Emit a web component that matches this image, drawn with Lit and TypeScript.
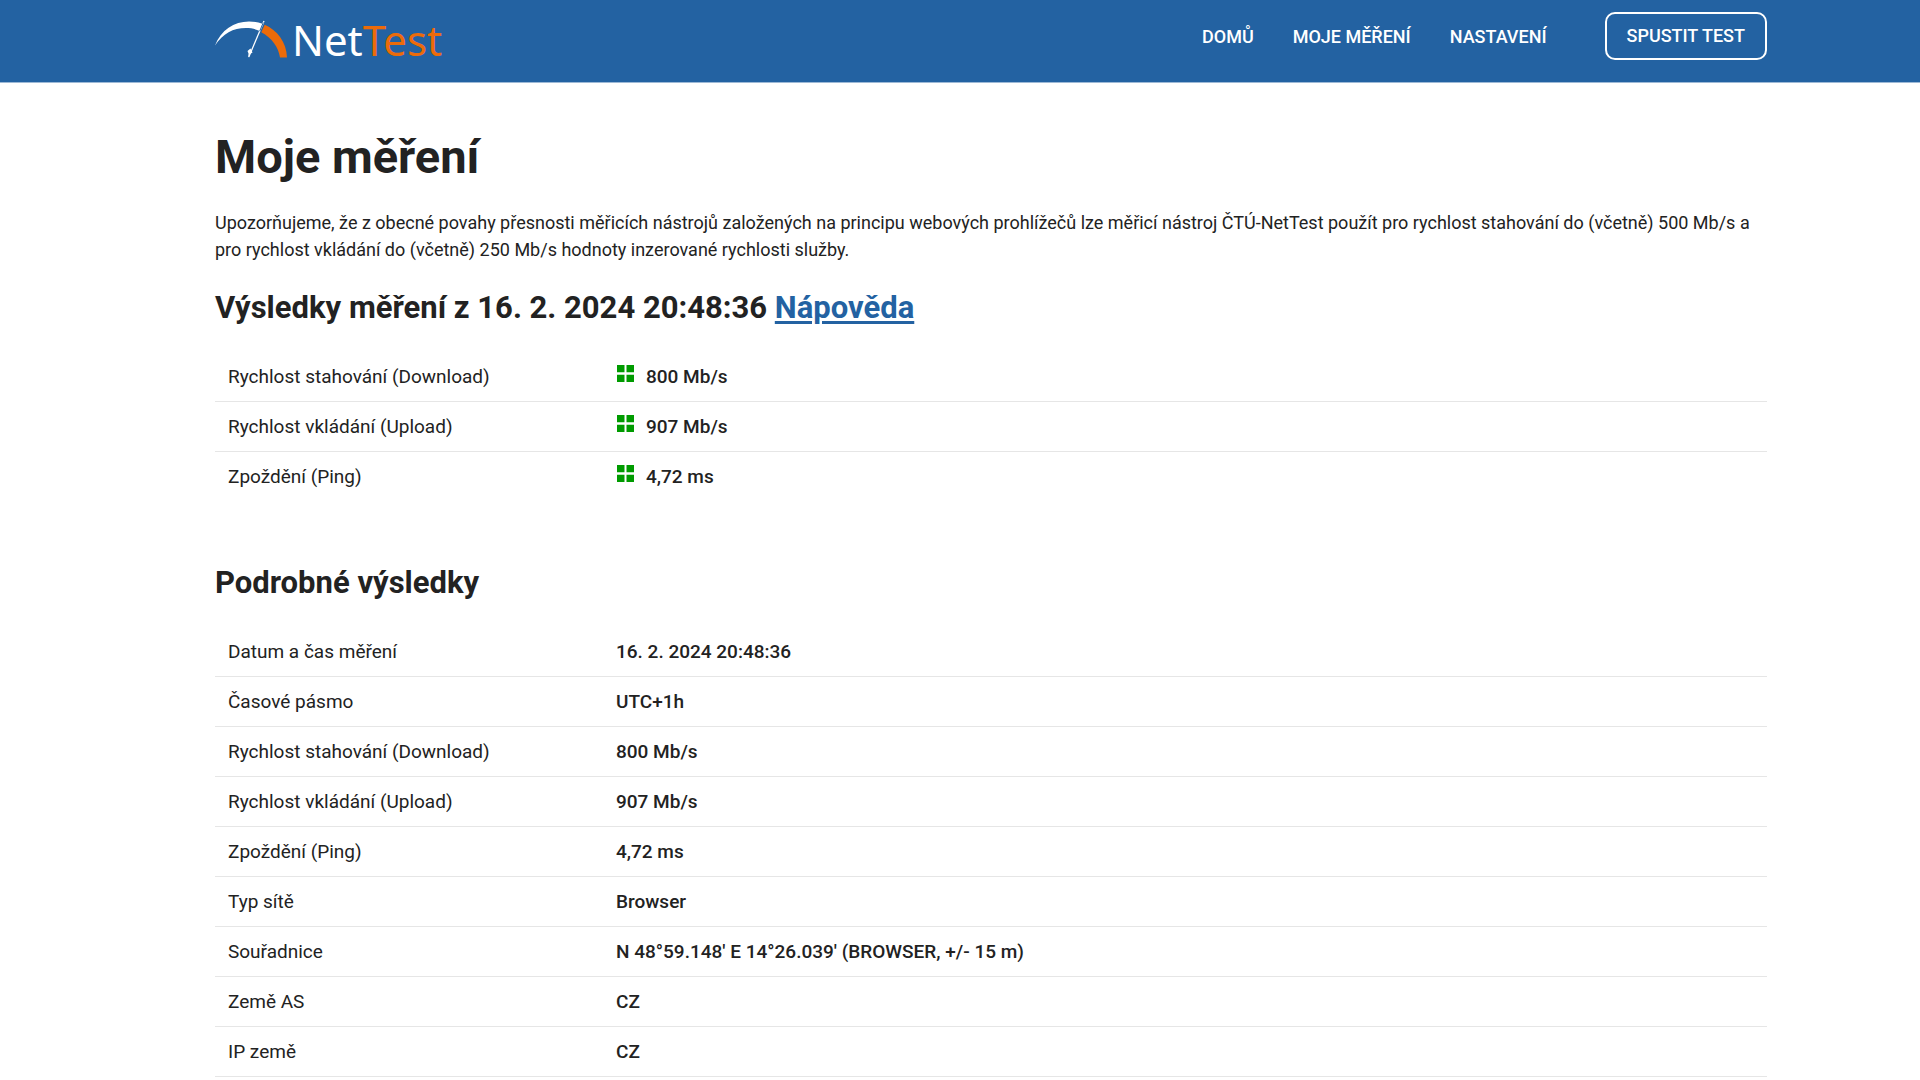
import { LitElement, html, css, svg } from "lit";
import { customElement } from "lit/decorators.js";

interface Row {
  label: string;
  value: string;
}

const SUMMARY: Row[] = [
  { label: "Rychlost stahování (Download)", value: "800 Mb/s" },
  { label: "Rychlost vkládání (Upload)", value: "907 Mb/s" },
  { label: "Zpoždění (Ping)", value: "4,72 ms" },
];

const DETAILS: Row[] = [
  { label: "Datum a čas měření", value: "16. 2. 2024 20:48:36" },
  { label: "Časové pásmo", value: "UTC+1h" },
  { label: "Rychlost stahování (Download)", value: "800 Mb/s" },
  { label: "Rychlost vkládání (Upload)", value: "907 Mb/s" },
  { label: "Zpoždění (Ping)", value: "4,72 ms" },
  { label: "Typ sítě", value: "Browser" },
  { label: "Souřadnice", value: "N 48°59.148' E 14°26.039' (BROWSER, +/- 15 m)" },
  { label: "Země AS", value: "CZ" },
  { label: "IP země", value: "CZ" },
];

const gauge = svg`
  <path d="M0 24.500C6 9 19 .5 34 .5c5 0 9.500 .8 13.500 2.300L44.700 10C41 8 36 7 31 7 18 7 8 12.500 0 24.500z" fill="#fff"/>
  <path d="M49.700 3.800C62 9 71.500 21 72 36.500h-7C63.500 26 57 17 46.300 11.200z" fill="#ec6b0a"/>
  <path d="M49 0 33.800 36" stroke="#fff" stroke-width="1.300" fill="none"/>
  <path d="M48.300 1.500 44.700 10.200" stroke="#2362a2" stroke-width="1" fill="none"/>
  <path d="M35.500 27.500 37.500 31.500 35 33 33.300 36.800 33.500 32.500 32.500 30z" fill="#fff"/>`;

const quality = html`<svg class="quality" viewBox="0 0 17 17" role="img" aria-label="Výborné">
  <path d="M0 0h7.500v7.200H0zM9.500 0H17v7.200H9.500zM0 9.800h7.500V17H0zM9.500 9.800H17V17H9.500z" fill="#009b00"/>
</svg>`;

@customElement("app-root")
export class AppRoot extends LitElement {
  static styles = css`
    :host {
      display: block;
      height: 100vh;
      overflow: hidden;
      background: #fff;
      color: #222;
      font-family: Roboto, "Liberation Sans", sans-serif;
      font-size: 18px;
      line-height: 27px;
    }
    .header {
      background: #2362a2;
      border-bottom: 1px solid #9db9d6;
    }
    .container {
      padding-left: 215px;
      padding-right: 153px;
    }
    .bar {
      display: flex;
      align-items: center;
      justify-content: space-between;
      height: 82px;
      padding-bottom: 10px;
      box-sizing: border-box;
    }
    .logo {
      display: flex;
      align-items: center;
      gap: 4px;
      padding-top: 8px;
      color: #fff;
      text-decoration: none;
      font-family: "Noto Sans", sans-serif;
      font-size: 42px;
      line-height: 48px;
    }
    .gauge {
      width: 73px;
      height: 39px;
      overflow: visible;
    }
    .accent {
      color: #ec6b0a;
    }
    .nav {
      display: flex;
      align-items: center;
      gap: 39px;
      font-weight: 500;
    }
    .link {
      color: #fff;
      text-decoration: none;
    }
    .start {
      box-sizing: border-box;
      height: 48px;
      margin-left: 19px;
      padding: 0 20px 2px;
      border: 2px solid #fff;
      border-radius: 10px;
      background: transparent;
      color: #fff;
      font: inherit;
    }
    .title {
      margin: 43px 0 21px;
      font-size: 47px;
      line-height: 62px;
    }
    .intro {
      margin: 0 0 25px;
    }
    .heading {
      margin: 0 0 24px;
      font-size: 31px;
      line-height: 40px;
    }
    .help {
      color: #2362a2;
      text-decoration-thickness: 3px;
      text-underline-offset: 3px;
    }
    .table {
      width: 100%;
      border-collapse: separate;
      border-spacing: 0;
      table-layout: fixed;
      margin-bottom: 61px;
      font-size: 19px;
    }
    .label,
    .value {
      box-sizing: border-box;
      height: 50px;
      padding: 0 13px 1px;
      border-bottom: 1px solid #e6e6e6;
      text-align: left;
      font-weight: 400;
    }
    .summary .row:last-child > * {
      border-bottom-color: transparent;
    }
    .label {
      width: 25%;
    }
    .value {
      font-weight: 500;
    }
    .quality {
      width: 17px;
      height: 17px;
      margin: 0 12px 0 1px;
      vertical-align: 1px;
    }
  `;

  private table(rows: Row[], rated: boolean) {
    return html`<table class="table ${rated ? "summary" : ""}">
      <tbody>
        ${rows.map(
          (r) => html`<tr class="row">
            <th class="label" scope="row">${r.label}</th>
            <td class="value">${rated ? quality : ""}${r.value}</td>
          </tr>`
        )}
      </tbody>
    </table>`;
  }

  render() {
    return html`
      <header class="header">
        <div class="container bar">
          <a class="logo" href="#">
            <svg class="gauge" viewBox="0 0 73 39" aria-hidden="true">${gauge}</svg>
            <span>Net<span class="accent">Test</span></span>
          </a>
          <nav class="nav">
            <a class="link" href="#">DOMŮ</a>
            <a class="link" href="#">MOJE MĚŘENÍ</a>
            <a class="link" href="#">NASTAVENÍ</a>
            <button class="start" type="button">SPUSTIT TEST</button>
          </nav>
        </div>
      </header>
      <main class="container">
        <h1 class="title">Moje měření</h1>
        <p class="intro">
          Upozorňujeme, že z obecné povahy přesnosti měřicích nástrojů založených na principu webových prohlížečů lze
          měřicí nástroj ČTÚ-NetTest použít pro rychlost stahování do (včetně) 500 Mb/s a pro rychlost vkládání do
          (včetně) 250 Mb/s hodnoty inzerované rychlosti služby.
        </p>
        <h2 class="heading">Výsledky měření z 16. 2. 2024 20:48:36 <a class="help" href="#">Nápověda</a></h2>
        ${this.table(SUMMARY, true)}
        <h2 class="heading">Podrobné výsledky</h2>
        ${this.table(DETAILS, false)}
      </main>
    `;
  }
}
